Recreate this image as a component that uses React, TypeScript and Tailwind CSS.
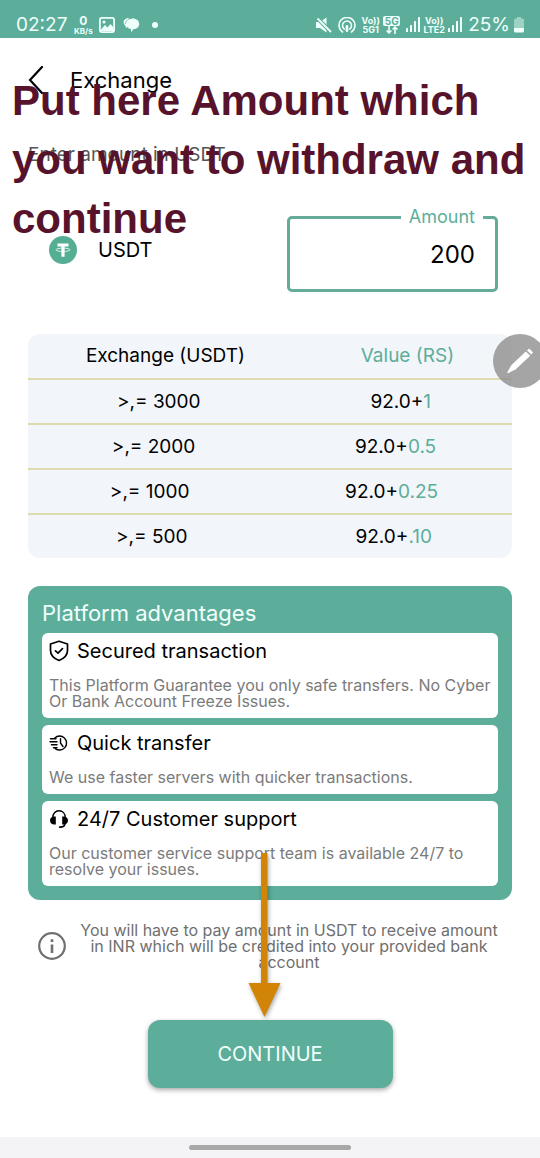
import type { ReactNode } from "react";

const rates = [
  { tier: ">,= 3000", base: "92.0+", bonus: "1" },
  { tier: ">,= 2000", base: "92.0+", bonus: "0.5" },
  { tier: ">,= 1000", base: "92.0+", bonus: "0.25" },
  { tier: ">,= 500", base: "92.0+", bonus: ".10" },
];

function SignalIcon() {
  return (
    <svg viewBox="0 0 14 16" className="h-4 w-3.5" fill="currentColor" aria-hidden="true">
      <rect x="0" y="11" width="2" height="4" rx="0.5" />
      <rect x="4" y="8" width="2" height="7" rx="0.5" />
      <rect x="8" y="4" width="2" height="11" rx="0.5" />
      <rect x="12" y="0" width="2" height="15" rx="0.5" />
    </svg>
  );
}

function StatusBar() {
  return (
    <header className="flex h-[38px] items-center justify-between bg-[#5cae9a] pt-3 pr-4 pl-4 text-[#effffb]">
      <div className="flex items-center">
        <span className="text-[19px] leading-6">02:27</span>
        <div className="ml-1.5 flex w-5 flex-col items-center font-bold">
          <span className="text-xs leading-3">0</span>
          <span className="text-[8px] leading-2">KB/s</span>
        </div>
        <svg viewBox="0 0 16 16" className="ml-1.5 size-4" aria-hidden="true">
          <rect x="0.9" y="0.9" width="14.2" height="14.2" rx="2" fill="none" stroke="currentColor" strokeWidth="1.8" />
          <circle cx="5" cy="5" r="1.6" fill="currentColor" />
          <path d="M2 12.5 6 8l2.5 2.5L11.5 7l3 3.5v3.5H2z" fill="currentColor" />
        </svg>
        <svg viewBox="0 0 17 16" className="ml-2 h-4 w-[17px]" fill="currentColor" aria-hidden="true">
          <path d="M6 1C3 1 .6 2.700.6 5.200c0 1.500.8 2.800 2 3.600L2.800 11l2-1.300z" />
          <path d="M9.700 1.600c3.700 0 6.500 2.300 6.500 5.300 0 2.800-2.300 5-5.500 5.200L8 15.200V12c-2.900-.5-4.800-2.600-4.800-5.100 0-3 2.800-5.300 6.500-5.300z" />
          <path d="M2.600 7C2.500 3.800 5.400 1.200 9 1.100" fill="none" stroke="#5cae9a" strokeWidth=".7" />
        </svg>
        <span className="ml-3 size-1.5 rounded-full bg-[#effffb]" />
      </div>
      <div className="flex items-center">
        <svg viewBox="0 0 16 16" className="size-4" fill="currentColor" aria-hidden="true">
          <path d="M0 5h4l6.500-4.500v15L4 11H0z" />
          <path d="M1 1l14 14" stroke="#5cae9a" strokeWidth="4" />
          <path d="M1.500 1.500 15 15" stroke="currentColor" strokeWidth="1.800" />
        </svg>
        <svg viewBox="0 0 18 16" className="ml-1.5 h-4 w-[18px]" fill="none" stroke="currentColor" strokeWidth="1.600" strokeLinecap="round" aria-hidden="true">
          <path d="M4.500 15a8 8 0 1 1 9 0" />
          <path d="M6.300 12.100a4.500 4.500 0 1 1 5.400 0" />
          <path d="M9 9.300v4.500" strokeWidth="2.600" />
        </svg>
        <div className="ml-1.5 flex w-[17px] flex-col items-center text-[9px] leading-[9px] font-bold">
          <span>Vo))</span>
          <span>5G1</span>
        </div>
        <div className="ml-1 flex w-[17px] flex-col items-center">
          <span className="w-full rounded-xs bg-[#effffb] text-center text-[10px] leading-[10px] font-bold text-[#5cae9a]">5G</span>
          <svg viewBox="0 0 12 8" className="h-2 w-3" fill="none" stroke="currentColor" strokeWidth="1.600" aria-hidden="true">
            <path d="M3 0v7M.6 4.500 3 7l2.400-2.500M9 8V1M6.600 3.500 9 1l2.400 2.500" />
          </svg>
        </div>
        <span className="ml-1.5"><SignalIcon /></span>
        <div className="ml-1 flex w-5 flex-col items-center text-[9px] leading-[9px] font-bold">
          <span>Vo))</span>
          <span>LTE2</span>
        </div>
        <span className="ml-1"><SignalIcon /></span>
        <span className="ml-1.5 text-[19px] leading-6">25%</span>
        <svg viewBox="0 0 10 16" className="ml-1 h-4 w-2.5" fill="currentColor" aria-hidden="true">
          <path d="M3 0h4v1.500h1.500A1.500 1.500 0 0 1 10 3v8H0V3a1.500 1.500 0 0 1 1.500-1.500H3z" opacity=".45" />
          <path d="M0 11h10v3a1.500 1.500 0 0 1-1.500 1.500h-7A1.500 1.500 0 0 1 0 14z" />
        </svg>
      </div>
    </header>
  );
}

function ShieldIcon() {
  return (
    <svg viewBox="0 0 20 22" className="h-[22px] w-5" fill="none" stroke="currentColor" strokeWidth="1.700" strokeLinejoin="round" strokeLinecap="round" aria-hidden="true">
      <path d="M10 1.200 18.500 4v6.500c0 4.700-3.500 8-8.500 10-5-2-8.500-5.300-8.500-10V4z" />
      <path d="m6.500 10.800 2.500 2.400 4.500-4.600" />
    </svg>
  );
}

function QuickIcon() {
  return (
    <svg viewBox="0 0 20 22" className="h-[22px] w-5" fill="none" stroke="currentColor" strokeWidth="1.400" strokeLinecap="round" strokeLinejoin="round" aria-hidden="true">
      <path d="M5.800 5.900a7 7 0 1 1 .5 10.700" />
      <path d="M11.500 6.800v4.200l2.500 3.500M1.500 6.700H7M1 9.700h7M2.500 12.700H8M4.500 15.700H8" />
    </svg>
  );
}

function HeadsetIcon() {
  return (
    <svg viewBox="0 0 20 22" className="h-[22px] w-5" fill="none" stroke="currentColor" strokeWidth="1.400" strokeLinecap="round" aria-hidden="true">
      <path d="M3.800 9.500C3.800 5.500 6.300 2.800 10 2.800s6.200 2.700 6.200 6.700M16 16c-.4 2-1.700 3-4 3.100" />
      <path d="M6.800 8.500v8H5.300C3 16.500 1 14.900 1 12.500s2-4 4.300-4zM13.200 8.500v8h1.500c2.300 0 4.300-1.600 4.300-4s-2-4-4.300-4z" fill="currentColor" stroke="none" />
      <path d="M10.700 19.100h1.300" strokeWidth="1.800" />
    </svg>
  );
}

function Advantage({ icon, title, children }: { icon: ReactNode; title: string; children: ReactNode }) {
  return (
    <article className="rounded-md bg-white px-[7px] pt-1.5 pb-2">
      <h3 className="flex items-center gap-2 text-xl leading-6 text-black">
        {icon}
        {title}
      </h3>
      <p className="mt-3.5 pb-px text-base leading-4 text-[#7b7b7b]">{children}</p>
    </article>
  );
}

export default function App() {
  return (
    <div className="relative flex min-h-screen flex-col overflow-hidden bg-white font-[Inter,'Noto_Sans',sans-serif] text-black">
      <StatusBar />

      <main className="flex grow flex-col px-7">
        <div className="mt-6 flex h-9 items-center">
          <button type="button" aria-label="Back" className="w-[42px]">
            <svg viewBox="0 0 16 28" className="h-7 w-4" fill="none" stroke="currentColor" strokeWidth="2.200" strokeLinecap="round" aria-hidden="true">
              <path d="M14 1 2 14l12 13" />
            </svg>
          </button>
          <h1 className="text-[22px] leading-7">Exchange</h1>
        </div>

        <p className="mt-[45px] text-[19px] leading-6 text-[#555555]">Enter amount in USDT</p>

        <div className="mt-10 flex items-start justify-between pr-[14px] pl-[21px]">
          <div className="mt-[29px] flex items-center gap-[21px]">
            <svg viewBox="0 0 28 28" className="size-7" aria-hidden="true">
              <circle cx="14" cy="14" r="14" fill="#53ae94" />
              <path d="M8.500 7.500h11v3H15.600v10.200h-3.200V10.500H8.500z" fill="#fff" />
              <ellipse cx="14" cy="13.800" rx="7" ry="1.700" fill="none" stroke="#fff" strokeWidth=".8" />
            </svg>
            <span className="text-xl leading-6">USDT</span>
          </div>
          <fieldset className="h-[85px] w-[211px] rounded-[5px] border-3 border-[#66aa98] px-3">
            <legend className="ml-auto px-2 text-lg leading-5 text-[#5cae9a]">
              <label htmlFor="amount">Amount</label>
            </legend>
            <input id="amount" type="text" inputMode="decimal" defaultValue="200" className="mt-3 h-8 w-full bg-transparent pr-2 text-right text-2xl outline-none" />
          </fieldset>
        </div>

        <table className="mt-[42px] block overflow-hidden rounded-xl bg-[#f2f5f9] text-[19px] leading-6">
          <thead className="block">
            <tr className="flex h-11 items-center justify-around">
              <th className="font-normal">Exchange (USDT)</th>
              <th className="font-normal text-[#5cae9a]">Value (RS)</th>
            </tr>
          </thead>
          <tbody className="block">
            {rates.map((rate) => (
              <tr key={rate.tier} className="flex h-[45px] items-center justify-around border-t-2 border-[#dcdcae]">
                <td className="pl-2">{rate.tier}</td>
                <td className="pl-2">
                  {rate.base}
                  <span className="text-[#5cae9a]">{rate.bonus}</span>
                </td>
              </tr>
            ))}
          </tbody>
        </table>

        <section className="mt-7 rounded-xl bg-[#5cae9a] px-3.5 pt-[13px] pb-3.5">
          <h2 className="text-[22px] leading-7 text-[#f1fffc]">Platform advantages</h2>
          <div className="mt-1.5 flex flex-col gap-[7px]">
            <Advantage icon={<ShieldIcon />} title="Secured transaction">
              This Platform Guarantee you only safe transfers. No Cyber Or Bank Account Freeze Issues.
            </Advantage>
            <Advantage icon={<QuickIcon />} title="Quick transfer">
              We use faster servers with quicker transactions.
            </Advantage>
            <Advantage icon={<HeadsetIcon />} title="24/7 Customer support">
              Our customer service support team is available 24/7 to resolve your issues.
            </Advantage>
          </div>
        </section>

        <div className="mt-[22px] flex items-center gap-2 pr-2 pl-2.5 text-[#6f6f6f]">
          <svg viewBox="0 0 28 28" className="size-7 shrink-0" fill="none" stroke="currentColor" aria-hidden="true">
            <circle cx="14" cy="14" r="12.800" strokeWidth="2.200" />
            <path d="M14 12.500V21M14 7.300v2.600" strokeWidth="2.600" />
          </svg>
          <p className="grow text-center text-base leading-4">
            You will have to pay amount in USDT to receive amount in INR which will be credited into your provided bank account
          </p>
        </div>

        <button type="button" className="mt-[50px] mb-12 h-[68px] w-[245px] self-center rounded-xl bg-[#5cae9a] text-xl text-[#f1fffc] shadow-[0_2px_5px_rgba(0,0,0,0.35)]">
          CONTINUE
        </button>
      </main>

      <footer className="flex h-[21px] items-center justify-center bg-[#f4f4f7]">
        <span className="h-[5px] w-[162px] rounded-full bg-[#a8a8a8]" />
      </footer>

      <button type="button" aria-label="Edit" className="absolute top-[334px] -right-[7px] flex size-[54px] items-center justify-center rounded-full bg-[#8f8f8f]/80 text-white">
        <svg viewBox="0 0 28 28" className="size-7" fill="currentColor" aria-hidden="true">
          <path d="M19.800 4.600 24.200 8.800 9.800 22.300l-5.300 2.700-2.600 1.300-.7-.7L2.500 23l3-5z" />
          <path d="m21 3.500 1.500-1.400q.6-.6 1.200 0l2.900 2.800q.6.600 0 1.200L25.200 7.600z" />
        </svg>
      </button>

      <p className="pointer-events-none absolute top-[71px] left-3 font-['Liberation_Sans',sans-serif] text-[42px] leading-[59px] font-bold whitespace-nowrap text-[#57132b]">
        Put here Amount which
        <br />
        you want to withdraw and
        <br />
        continue
      </p>

      <svg viewBox="0 0 40 170" className="pointer-events-none absolute top-[850px] left-[244px] h-[170px] w-10 drop-shadow-[1px_2px_2px_rgba(0,0,0,0.35)]" fill="#d28406" aria-hidden="true">
        <path d="M17 3h6.500v130H36.500L20.500 167 4.500 133H17z" />
      </svg>
    </div>
  );
}
